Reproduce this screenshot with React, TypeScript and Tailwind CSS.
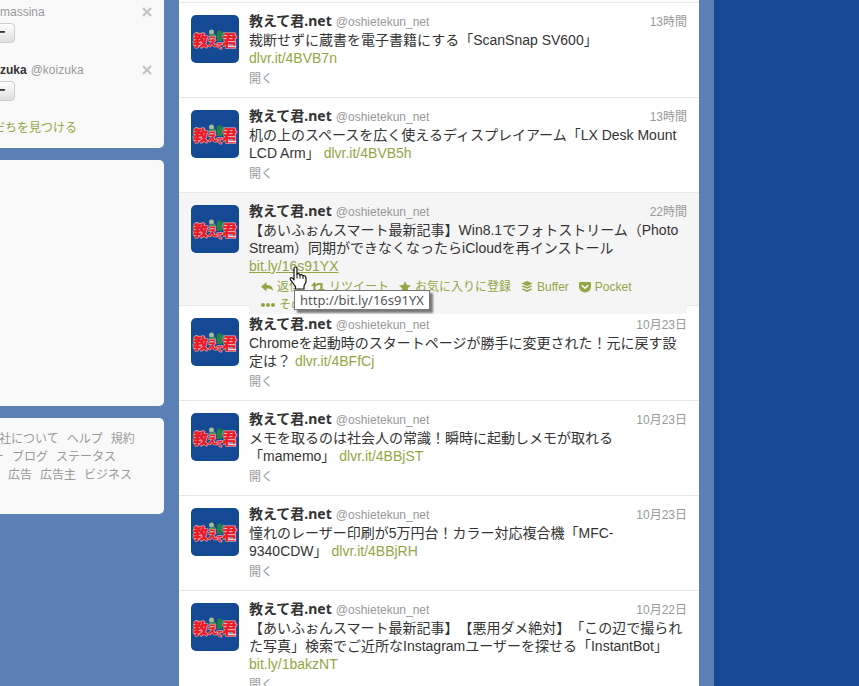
import React from "react";

type Tweet = {
  id: string;
  time: string;
  lines: string[];
  link: string;
  inlineLink?: boolean;
  active?: boolean;
};

const tweets: Tweet[] = [
  { id: "a", time: "13時間", lines: ["裁断せずに蔵書を電子書籍にする「ScanSnap SV600」"], link: "dlvr.it/4BVB7n" },
  { id: "b", time: "13時間", lines: ["机の上のスペースを広く使えるディスプレイアーム「LX Desk Mount", "LCD Arm」"], link: "dlvr.it/4BVB5h", inlineLink: true },
  { id: "c", time: "22時間", lines: ["【あいふぉんスマート最新記事】Win8.1でフォトストリーム（Photo", "Stream）同期ができなくなったらiCloudを再インストール"], link: "bit.ly/16s91YX", active: true },
  { id: "d", time: "10月23日", lines: ["Chromeを起動時のスタートページが勝手に変更された！元に戻す設", "定は？"], link: "dlvr.it/4BFfCj", inlineLink: true },
  { id: "e", time: "10月23日", lines: ["メモを取るのは社会人の常識！瞬時に起動しメモが取れる", "「mamemo」"], link: "dlvr.it/4BBjST", inlineLink: true },
  { id: "f", time: "10月23日", lines: ["憧れのレーザー印刷が5万円台！カラー対応複合機「MFC-", "9340CDW」"], link: "dlvr.it/4BBjRH", inlineLink: true },
  { id: "g", time: "10月22日", lines: ["【あいふぉんスマート最新記事】【悪用ダメ絶対】「この辺で撮られ", "た写真」検索でご近所なInstagramユーザーを探せる「InstantBot」"], link: "bit.ly/1bakzNT" },
];

function Avatar() {
  return (
    <svg viewBox="0 0 48 48" className="size-12 shrink-0 rounded-[5px]" role="img" aria-label="教えて君.net">
      <rect width="48" height="48" fill="#144a94" />
      <circle cx="20.500" cy="17" r="2.500" fill="#a9b99a" />
      <path d="M18 19.500h5l1 4h-6z" fill="#4f9458" />
      <path d="M26 18q0-2.500 2.500-2.500T31 18v8h-5z" fill="#23804a" />
      <path d="M31 20l2-3M25 22l-2-3" stroke="#4f9a5a" strokeWidth="1.500" />
      <g
        fill="#ea1a26"
        stroke="#f0a9ae"
        strokeWidth="1.200"
        strokeLinejoin="round"
        paintOrder="stroke"
        fontFamily="'Noto Sans CJK JP', sans-serif"
        fontWeight="900"
      >
        <text x="2" y="31" fontSize="15">教</text>
        <text x="16" y="31" fontSize="11">え</text>
        <text x="25" y="33" fontSize="7">て</text>
        <text x="31" y="31" fontSize="15">君</text>
      </g>
      <path d="M26.500 18q0-2.500 2-2.500t2 2.500v7h-4z" fill="#23804a" />
      <path d="M37 31.500h8" stroke="#e6d9e2" strokeWidth="1.500" />
    </svg>
  );
}

const icons = {
  reply: (
    <svg viewBox="0 0 12 10" className="h-[10px] w-3" fill="currentColor">
      <path d="M5.500 0v3C9 3 12 4.500 12 9c-1.500-1.800-3.500-2.400-6.500-2.400v2.900L0 4.700z" />
    </svg>
  ),
  retweet: (
    <svg viewBox="0 0 14 11" className="h-[11px] w-[14px]" fill="currentColor">
      <path d="M3.500 0L7 4H4.700v4H8v2H2.400V4H0z" />
      <path d="M6 1h5.600v6H14l-3.500 4L7 7h2.300V3H6z" />
    </svg>
  ),
  star: (
    <svg viewBox="0 0 12 12" className="size-3" fill="currentColor">
      <path d="M6 0l1.700 4.100 4.300.3-3.300 2.800 1 4.300L6 9.200l-3.700 2.300 1-4.300L0 4.400l4.300-.3z" />
    </svg>
  ),
  buffer: (
    <svg viewBox="0 0 12 12" className="size-3" fill="currentColor">
      <path d="M6 0l5.500 2.500L6 5 .5 2.500z" />
      <path d="M.5 5.200l1.800-.8L6 6.100l3.700-1.700 1.800.8L6 7.800z" />
      <path d="M.5 8.300l1.800-.8L6 9.200l3.700-1.700 1.800.8L6 11z" />
    </svg>
  ),
  pocket: (
    <svg viewBox="0 0 12 11" className="h-[11px] w-3">
      <path d="M1.200 0h9.600Q12 0 12 1.200V4.500a6 6 0 0 1-12 0V1.200Q0 0 1.200 0z" fill="currentColor" />
      <path d="M3.200 3.600L6 6.200l2.800-2.600" fill="none" stroke="#f5f5f5" strokeWidth="1.500" strokeLinecap="round" />
    </svg>
  ),
  more: (
    <svg viewBox="0 0 14 4" className="h-1 w-[14px]" fill="currentColor">
      <circle cx="2" cy="2" r="2" />
      <circle cx="7" cy="2" r="2" />
      <circle cx="12" cy="2" r="2" />
    </svg>
  ),
};

function Action({ icon, label }: { icon: keyof typeof icons; label: string }) {
  return (
    <button type="button" className="flex h-[18px] items-center gap-1 whitespace-nowrap">
      {icons[icon]}
      <span>{label}</span>
    </button>
  );
}

function HandCursor() {
  return (
    <svg viewBox="0 0 18 24" className="absolute left-10 top-[9px] z-30 h-6 w-[18px]" aria-hidden="true">
      <path
        d="M5 2.500Q5 1 6.500 1T8 2.500V8.500Q8.200 7.500 9.500 7.700T11 9.200Q11.300 8.300 12.500 8.600T14 10Q14.300 9.300 15.400 9.700T17 11.500V16L15 20V23H6.500V20.500L1.500 13.800Q.8 12.200 2 11.700T5 14z"
        fill="#fff"
        stroke="#111"
        strokeWidth="1.200"
        strokeLinejoin="round"
      />
      <path d="M8 8.500v4M11 9.200v3.300M14 10v3" stroke="#111" strokeWidth="1" />
    </svg>
  );
}

function TweetRow({ tweet }: { tweet: Tweet }) {
  return (
    <li className={tweet.active ? "border-b border-[#e8e8e8] bg-[#f5f5f5]" : "border-b border-[#e8e8e8] bg-white"}>
      <article className={tweet.active ? "flex h-28 gap-[10px] px-3" : "flex gap-[10px] px-3 pb-[9px]"}>
        <div className="pt-3">
          <Avatar />
        </div>
        <div className="min-w-0 flex-1 pt-[11px]">
          <header className="flex h-[17px] items-start justify-between">
            <div className="flex items-baseline gap-1">
              <strong className="font-['Noto_Sans','Noto_Sans_CJK_JP',sans-serif] text-sm leading-[14px] text-[#333]">教えて君.net</strong>
              <a href="#profile" className="text-xs leading-[14px] text-[#999]">@oshietekun_net</a>
            </div>
            <time className="text-xs leading-4 text-[#999]">{tweet.time}</time>
          </header>
          <p className="text-sm leading-[18px] whitespace-nowrap text-[#333]">
            {tweet.lines.map((line, i) => (
              <React.Fragment key={line}>
                {i > 0 && <br />}
                {line}
              </React.Fragment>
            ))}
            {tweet.inlineLink ? " " : <br />}
            {tweet.active ? (
              <span className="relative inline-block">
                <a href="#link" className="text-[#93a644] underline">{tweet.link}</a>
                <HandCursor />
                <span
                  role="tooltip"
                  className="absolute left-[45px] top-[33px] z-20 h-5 border border-[#767676] bg-white px-[5px] font-['Noto_Sans'] text-[13px] leading-[18px] text-[#575757] shadow-[3px_3px_2px_rgba(0,0,0,0.5)]"
                >
                  http://bit.ly/16s91YX
                </span>
              </span>
            ) : (
              <a href="#link" className="text-[#93a644]">{tweet.link}</a>
            )}
          </p>
          {tweet.active ? (
            <div className="relative z-10 flex flex-wrap gap-x-[10px] bg-[#f5f5f5] pt-[3px] pl-3 text-xs leading-[18px] text-[#93a644]">
              <Action icon="reply" label="返信" />
              <Action icon="retweet" label="リツイート" />
              <Action icon="star" label="お気に入りに登録" />
              <Action icon="buffer" label="Buffer" />
              <Action icon="pocket" label="Pocket" />
              <Action icon="more" label="その他" />
            </div>
          ) : (
            <button type="button" className="mt-[3px] block text-xs leading-[18px] text-[#999]">開く</button>
          )}
        </div>
      </article>
    </li>
  );
}

function Suggestion({ name, handle }: { name?: string; handle: string }) {
  return (
    <div className="h-[58px]">
      <div className="flex h-[18px] items-center justify-between pr-3 text-xs leading-[18px]">
        <div className="flex gap-1">
          {name && <strong className="text-[#333]">{name}</strong>}
          <span className="text-[#999]">{handle}</span>
        </div>
        <button type="button" aria-label="閉じる" className="text-[#c4c4c4]">
          <svg viewBox="0 0 10 10" className="size-[10px]">
            <path d="M1 1l8 8M9 1L1 9" stroke="currentColor" strokeWidth="2.400" />
          </svg>
        </button>
      </div>
      <button
        type="button"
        className="mt-[2px] -ml-[70px] block h-5 w-[85px] rounded border border-[#ccc] bg-linear-to-b from-white to-[#dedede] pr-2 text-right text-xs font-bold leading-[18px] text-[#333]"
      >
        フォロー
      </button>
    </div>
  );
}

export default function App() {
  return (
    <div className="flex h-screen overflow-hidden bg-[#144a94] font-['Liberation_Sans','Noto_Sans_CJK_JP',sans-serif] [text-spacing-trim:space-all]">
      <div className="flex shrink-0 gap-[15px] bg-[#5b80b6] pr-[15px]">
        <aside className="w-[164px] overflow-hidden">
          <section className="h-[148px] rounded-br-[5px] bg-[#f9f9f9] pt-[3px]">
            <Suggestion handle="massina" />
            <Suggestion name="zuka" handle="@koizuka" />
            <a href="#friends" className="-ml-[19px] block text-xs leading-[18px] text-[#93a644]">友だちを見つける</a>
          </section>
          <section className="mt-3 h-[246px] rounded-r-[5px] bg-[#f9f9f9]" />
          <nav className="mt-3 h-24 rounded-r-[5px] bg-[#f9f9f9] pt-3 text-xs leading-[18px] text-[#999]">
            <div className="-ml-px flex gap-2">
              <a href="#about">社について</a>
              <a href="#help">ヘルプ</a>
              <a href="#terms">規約</a>
            </div>
            <div className="-ml-2 flex gap-2">
              <a href="#privacy">ー</a>
              <a href="#blog">ブログ</a>
              <a href="#status">ステータス</a>
            </div>
            <div className="ml-2 flex gap-2">
              <a href="#ads">広告</a>
              <a href="#advertisers">広告主</a>
              <a href="#business">ビジネス</a>
            </div>
          </nav>
        </aside>
        <main className="w-[520px] bg-white pt-[2px]">
          <ol className="border-t border-[#e8e8e8]">
            {tweets.map((tweet) => (
              <TweetRow key={tweet.id} tweet={tweet} />
            ))}
          </ol>
        </main>
      </div>
    </div>
  );
}
